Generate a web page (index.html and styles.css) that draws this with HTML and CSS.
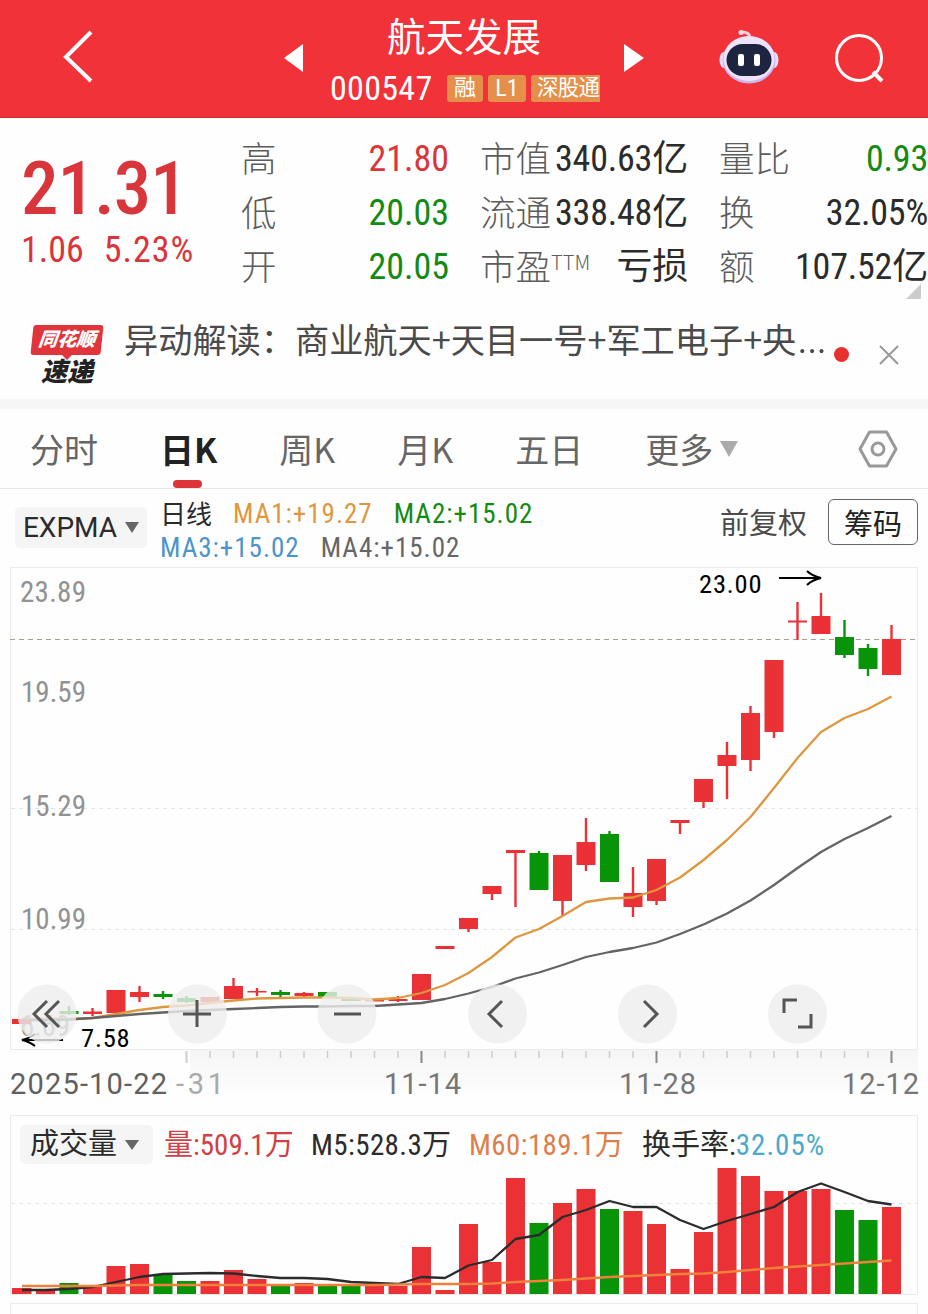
FILE: index.html
```html
<!DOCTYPE html>
<html lang="zh-CN">
<head>
    <meta charset="UTF-8">
    <meta name="viewport" content="width=device-width, initial-scale=1.0">
    <title>航天发展 000547</title>
    <link rel="stylesheet" href="styles.css">
</head>
<body>

<header class="topbar">
    <svg class="back" width="36" height="56" viewBox="0 0 36 56"><path d="M31 4 L6 29 L31 53" fill="none" stroke="#fff" stroke-width="4"/></svg>
    <svg class="arrow" width="20" height="28" viewBox="0 0 20 28"><path d="M19 0 V28 L0 14 Z" fill="#fff"/></svg>
    <div class="stock">
        <h1>航天发展</h1>
        <div class="code-row">
            <span class="code">000547</span>
            <span class="tag tag-rong">融</span>
            <span class="tag tag-l1">L1</span>
            <span class="tag tag-sgt">深股通</span>
        </div>
    </div>
    <svg class="arrow" width="20" height="28" viewBox="0 0 20 28"><path d="M0 0 V28 L20 14 Z" fill="#fff"/></svg>
    <svg class="robot" width="60" height="56" viewBox="0 0 60 56">
        <path d="M31 9 Q30 4 23 4" fill="none" stroke="#ffc9d8" stroke-width="3" stroke-linecap="round"/>
        <circle cx="22" cy="4.500" r="2.500" fill="#ffdce6"/>
        <ellipse cx="5" cy="32" rx="4.500" ry="8" fill="#eadcfb"/>
        <ellipse cx="55" cy="32" rx="4.500" ry="8" fill="#eadcfb"/>
        <ellipse cx="30" cy="32" rx="26.500" ry="23.500" fill="#c9b8f2"/>
        <ellipse cx="30" cy="30.500" rx="25.500" ry="22.500" fill="#efe3fb"/>
        <rect x="7.500" y="16" width="45" height="32" rx="16" fill="#1d2440"/>
        <rect x="19" y="26" width="6" height="12" rx="2" fill="#fff"/>
        <rect x="35" y="26" width="6" height="12" rx="2" fill="#fff"/>
    </svg>
    <svg class="search" width="52" height="52" viewBox="0 0 52 52"><circle cx="25" cy="25" r="22.500" fill="none" stroke="#fff" stroke-width="3"/><path d="M39 39 L48 48" stroke="#fff" stroke-width="4"/></svg>
</header>

<section class="quote">
    <div class="price">
        <div class="last">21.31</div>
        <div class="change"><span>1.06</span><span class="percent">5.23%</span></div>
    </div>
    <dl class="col col-a">
        <dt>高</dt><dd class="up">21.80</dd>
        <dt>低</dt><dd class="down">20.03</dd>
        <dt>开</dt><dd class="down">20.05</dd>
    </dl>
    <dl class="col col-b">
        <dt>市值</dt><dd>340.63<i>亿</i></dd>
        <dt>流通</dt><dd>338.48<i>亿</i></dd>
        <dt>市盈<sup>TTM</sup></dt><dd><i>亏损</i></dd>
    </dl>
    <dl class="col col-c">
        <dt>量比</dt><dd class="down">0.93</dd>
        <dt>换</dt><dd>32.05%</dd>
        <dt>额</dt><dd>107.52<i>亿</i></dd>
    </dl>
    <svg class="corner" width="15" height="15" viewBox="0 0 15 15"><path d="M15 0 V15 H0 Z" fill="#ccc"/></svg>
</section>

<section class="news">
    <div class="logo">
        <span class="logo-top">同花顺</span>
        <svg width="10" height="5" viewBox="0 0 10 5"><path d="M0 0 H10 L5 5 Z" fill="#e0353a"/></svg>
        <span class="logo-bottom">速递</span>
    </div>
    <p>异动解读：商业航天+天目一号+军工电子+央<span class="dots">…</span></p>
    <i class="dot"></i>
    <svg class="close" width="22" height="22" viewBox="0 0 22 22"><path d="M2 2 L20 20 M20 2 L2 20" stroke="#999" stroke-width="2"/></svg>
</section>

<nav class="tabs">
    <a>分时</a>
    <a class="active">日K</a>
    <a>周K</a>
    <a>月K</a>
    <a>五日</a>
    <a>更多<svg width="18" height="16" viewBox="0 0 18 16"><path d="M0 0 H18 L9 16 Z" fill="#aaa"/></svg></a>
    <svg class="gear" width="40" height="38" viewBox="0 0 40 38"><path d="M11.500 2 H28.500 L38 19 L28.500 36 H11.500 L2 19 Z" fill="none" stroke="#999" stroke-width="3" stroke-linejoin="round"/><circle cx="20" cy="19" r="6" fill="none" stroke="#999" stroke-width="3"/></svg>
</nav>

<section class="legend">
    <div class="picker">EXPMA<svg width="14" height="11" viewBox="0 0 14 11"><path d="M0 0 H14 L7 11 Z" fill="#666"/></svg></div>
    <div class="ma">
        <div><span class="cjk">日线</span><span class="ma1">MA1:+19.27</span><span class="ma2">MA2:+15.02</span></div>
        <div><span class="ma3">MA3:+15.02</span><span class="ma4">MA4:+15.02</span></div>
    </div>
    <span class="adjust">前复权</span>
    <button class="chips">筹码</button>
</section>

<svg class="chart" width="928" height="549" viewBox="0 566 928 549">
    <defs>
        <linearGradient id="fade" x1="0" y1="0" x2="0" y2="1">
            <stop offset="0" stop-color="#f5f5f5"/>
            <stop offset="1" stop-color="#fefefe"/>
        </linearGradient>
    </defs>
    <rect x="190" y="1050" width="728" height="50" fill="url(#fade)"/>
    <rect class="frame" x="10.500" y="567.500" width="907" height="482"/>
    <path class="grid" d="M11 808.500 H917 M11 929.500 H917"/>
    <path class="last-line" d="M10 639.500 H917"/>
    <g class="axis">
        <text x="20" y="602" textLength="66">23.89</text>
        <text x="21" y="702" textLength="65">19.59</text>
        <text x="21" y="816" textLength="65">15.29</text>
        <text x="21" y="929" textLength="65">10.99</text>
        <text x="20" y="1036" textLength="50">6.69</text>
    </g>
    <g id="ticks"></g>
    <g id="candles"></g>
    <polyline id="ma1" class="line" stroke="#df973f"/>
    <polyline id="ma4" class="line" stroke="#646464"/>
    <g class="extremes">
        <text x="699" y="593">23.00</text>
        <path d="M779 578 H819 M807 571 Q812 576 821 578 Q812 580 807 585"/>
        <text x="81" y="1047">7.58</text>
        <path d="M23 1040 H63 M35 1034 Q30 1038 22 1040 Q30 1042 35 1046"/>
    </g>
    <g class="dates">
        <text x="10" y="1094" textLength="157" class="start">2025-10-22</text>
        <text x="176" y="1094" textLength="48" class="faded">-31</text>
        <text x="384" y="1094" textLength="77">11-14</text>
        <text x="619" y="1094" textLength="77">11-28</text>
        <text x="842" y="1094" textLength="77">12-12</text>
    </g>
    <g class="controls">
        <circle cx="47" cy="1014" r="29.500"/>
        <circle cx="197.500" cy="1014" r="29.500"/>
        <circle cx="347" cy="1014" r="29.500"/>
        <circle cx="497.500" cy="1014" r="29.500"/>
        <circle cx="647.500" cy="1014" r="29.500"/>
        <circle cx="797.500" cy="1014" r="29.500"/>
        <path d="M47 1001 L34 1014 L47 1027 M59 1001 L46 1014 L59 1027"/>
        <path d="M183 1014 H211 M197 1000 V1027"/>
        <path d="M334 1014 H361"/>
        <path d="M502 1001 L489 1014 L502 1027"/>
        <path d="M644 1001 L657 1014 L644 1027"/>
        <path d="M784 1013 V1000 H797 M811 1014 V1027 H798"/>
    </g>
</svg>

<section class="volume">
    <div class="vol-legend">
        <div class="picker vol-picker">成交量<svg width="14" height="10" viewBox="0 0 14 10"><path d="M0 0 H14 L7 10 Z" fill="#666"/></svg></div>
        <span class="v1">量:509.1万</span>
        <span class="v2">M5:528.3万</span>
        <span class="v3">M60:189.1万</span>
        <span class="v4">换手率:<b>32.05%</b></span>
    </div>
    <svg width="906" height="129" viewBox="11 1165 906 129">
        <path class="grid" d="M11 1203.500 H917"/>
        <g id="volumes"></g>
        <polyline id="m5" class="line" stroke="#2b2b2b"/>
        <polyline id="m60" class="line" stroke="#f0803c"/>
    </svg>
</section>
<div class="next-panel"></div>

<script src="chart.js"></script>
</body>
</html>
```
FILE: styles.css
```css
* {
    box-sizing: border-box;
}
body {
    margin: 0;
    width: 928px;
    height: 1314px;
    overflow: hidden;
    background: #fefefe;
    color: #2b2b2b;
    font-family: Roboto, "Noto Sans CJK SC", sans-serif;
    font-stretch: 87%;
}
svg {
    display: block;
    flex: none;
}
h1, dl, dd, p {
    margin: 0;
}
i {
    font-style: normal;
}

/* top bar */
.topbar {
    display: flex;
    align-items: flex-start;
    height: 118px;
    background: #f13239;
    border-bottom: 1px solid #c9323a;
    color: #fff;
}
.back {
    margin: 28px 0 0 60px;
}
.arrow {
    margin-top: 44px;
}
.back + .arrow {
    margin-left: 188px;
}
.stock {
    width: 320px;
    padding-left: 26px;
}
.stock h1 {
    width: 268px;
    height: 75px;
    font: 400 38.5px/68px "Noto Sans CJK SC", sans-serif;
    text-align: center;
}
.code-row {
    display: flex;
    gap: 5px;
    height: 27px;
    line-height: 27px;
}
.code {
    flex: none;
    width: 112px;
    font-size: 34px;
    letter-spacing: 0.3px;
}
.tag {
    flex: none;
    height: 27px;
    border-radius: 3px;
    background: #e5904a;
    font-size: 22px;
    line-height: 26px;
    text-align: center;
}
.tag-rong {
    width: 36px;
}
.tag-l1 {
    width: 38px;
    font-size: 24px;
}
.tag-sgt {
    width: 69px;
    padding-left: 6px;
    border-radius: 3px 0 0 3px;
    font-size: 21.5px;
    letter-spacing: -0.8px;
    text-align: left;
    white-space: nowrap;
}
.robot {
    margin: 28px 0 0 75px;
}
.search {
    margin: 33px 0 0 55px;
}

/* quote */
.quote {
    position: relative;
    display: flex;
    height: 187px;
    padding-top: 14px;
}
.price {
    width: 241px;
    padding-left: 21px;
    color: #d9363c;
}
.last {
    height: 92px;
    padding-top: 10px;
    font-size: 75px;
    font-weight: 500;
    line-height: 92px;
    letter-spacing: -1px;
}
.change {
    display: flex;
    gap: 20px;
    margin-top: 6px;
    font-size: 36px;
    line-height: 40px;
}
.percent {
    letter-spacing: 1px;
}
.col {
    display: grid;
    grid-template-columns: 72px 1fr;
    grid-auto-rows: 54px;
    line-height: 54px;
}
.col-a {
    width: 208px;
}
.col-b {
    width: 208px;
    margin-left: 31px;
}
.col-c {
    width: 209px;
    margin-left: 31px;
}
.col dt {
    margin-top: -2px;
    font: 300 35.5px/54px "Noto Sans CJK SC", sans-serif;
    color: #5c5c5c;
    white-space: nowrap;
}
.col dd {
    font-size: 36px;
    text-align: right;
    white-space: nowrap;
}
.col-b dd, .col-c dd {
    letter-spacing: -0.2px;
}
.col sup {
    font-size: 20px;
    line-height: 0;
    vertical-align: 10px;
}
.up {
    color: #d9363c;
}
.down {
    color: #138a13;
}
.corner {
    position: absolute;
    right: 7px;
    bottom: 6px;
}

/* news strip */
.news {
    display: flex;
    height: 104px;
    border-bottom: 10px solid #f6f6f6;
}
.logo {
    display: flex;
    flex-direction: column;
    align-items: center;
    width: 72px;
    margin: 20px 0 0 31px;
    font-weight: 900;
    font-style: italic;
}
.logo-top {
    width: 70px;
    height: 30px;
    border-radius: 3px;
    background: #e0353a;
    color: #fff;
    font-size: 19px;
    line-height: 30px;
    text-align: center;
    transform: skewX(-6deg);
}
.logo-bottom {
    margin-top: -2px;
    color: #222;
    font-size: 26px;
    line-height: 28px;
}
.news p {
    width: 709px;
    margin-left: 21px;
    font: 34.2px/67px "Noto Sans CJK SC", sans-serif;
    color: #4a4a4a;
    white-space: nowrap;
}
.dots {
    font-family: Roboto, sans-serif;
    font-size: 49px;
    font-weight: 300;
    line-height: 1;
}
.dot {
    width: 15px;
    height: 15px;
    margin: 42px 0 0 1px;
    border-radius: 50%;
    background: #e8302f;
}
.close {
    margin: 39px 0 0 29px;
}

/* period tabs */
.tabs {
    display: flex;
    height: 80px;
    padding-left: 30px;
    border-bottom: 1px solid #e6e6e6;
    font: 34px/78px "Noto Sans CJK SC", sans-serif;
    color: #666;
}
.tabs a {
    display: flex;
    align-items: center;
    margin-right: 62px;
}
.tabs .active {
    position: relative;
    color: #222;
    font-weight: 700;
}
.tabs .active::after {
    content: "";
    position: absolute;
    left: 13px;
    bottom: 0;
    width: 29px;
    height: 8px;
    border-radius: 4px;
    background: #dc3438;
}
.tabs a svg {
    margin-left: 7px;
}
.gear {
    margin: 21px 0 0 58px;
}

/* indicator legend */
.legend {
    display: flex;
    height: 77px;
}
.picker {
    display: flex;
    align-items: center;
    justify-content: center;
    gap: 8px;
    width: 132px;
    height: 41px;
    margin: 18px 0 0 15px;
    border-radius: 5px;
    background: #f5f5f5;
    font-size: 28px;
    font-stretch: 100%;
}
.ma {
    width: 560px;
    padding: 8px 0 0 13px;
    font-size: 27px;
    line-height: 34px;
    letter-spacing: 1px;
}
.ma div {
    display: flex;
    height: 34px;
    gap: 21px;
}
.cjk {
    font-family: "Noto Sans CJK SC", sans-serif;
    font-size: 26px;
    line-height: 31px;
    letter-spacing: 0;
}
.ma1 {
    color: #df973f;
}
.ma2 {
    color: #138a13;
}
.ma3 {
    color: #4c94cb;
}
.ma4 {
    color: #666;
}
.adjust {
    margin-left: 13px;
    font-size: 29px;
    line-height: 71px;
    color: #4a4a4a;
}
.chips {
    width: 90px;
    height: 46px;
    margin: 10px 0 0 21px;
    padding: 0;
    border: 1px solid #666;
    border-radius: 6px;
    background: none;
    color: #222;
    font: 29px/42px "Noto Sans CJK SC", sans-serif;
}

/* charts */
.frame {
    fill: none;
    stroke: #ebebeb;
}
.grid {
    stroke: #e4e4e4;
    stroke-dasharray: 4 4;
}
.last-line {
    stroke: #a9a08f;
    stroke-dasharray: 5 4;
}
.line {
    fill: none;
    stroke-width: 2.3;
    stroke-linejoin: round;
}
.axis text {
    fill: #929292;
    font-size: 29px;
}
.extremes text {
    fill: #000;
    font-size: 26.5px;
    letter-spacing: 0.8px;
}
.extremes path {
    fill: none;
    stroke: #000;
    stroke-width: 2;
}
.dates text {
    fill: #777;
    font-size: 29px;
    font-stretch: 100%;
}
.dates .start {
    fill: #606060;
}
.dates .faded {
    fill: #aaa;
}
.controls circle {
    fill: #eee;
    fill-opacity: 0.8;
}
.controls path {
    fill: none;
    stroke: #555;
    stroke-width: 3;
}

/* volume */
.volume {
    width: 908px;
    height: 180px;
    margin-left: 10px;
    border: 1px solid #ebebeb;
}
.vol-legend {
    display: flex;
    height: 49px;
    font-size: 29px;
    line-height: 58px;
    white-space: nowrap;
}
.vol-picker {
    width: 133px;
    height: 39px;
    margin: 9px 11px 0 9px;
    padding-right: 4px;
    line-height: 39px;
    font-size: 29px;
}
.vol-legend b {
    font-weight: 400;
    letter-spacing: 1px;
    color: #4ba9cb;
}
.v1 {
    width: 147px;
    color: #d04045;
}
.v2 {
    width: 158px;
    letter-spacing: 0.4px;
}
.v3 {
    width: 173px;
    letter-spacing: 0.4px;
    color: #dd7e4b;
}
.next-panel {
    width: 908px;
    height: 20px;
    margin: 8px 0 0 10px;
    border: 1px solid #ebebeb;
}
```
FILE: chart.js
```javascript
const RED = '#ea3136';
const GREEN = '#089408';
const STEP = 23.5;
const X0 = 22;

// [color, body top, body bottom, high, low]
const candles = [
    ['r', 1019, 1024], ['r', 1018, 1021], ['g', 1011, 1014, 1006, 1015], ['r', 1011.5, 1014, 1008, 1016],
    ['r', 990, 1013], ['r', 992, 997, 986, 1002], ['g', 994, 997, 991, 999], ['g', 998, 1002, 996, 1003],
    ['r', 997, 1002], ['r', 986, 999, 978, 999], ['r', 991, 992.5, 988, 996], ['g', 992, 995, 990, 997],
    ['r', 993, 996, 992, 997], ['g', 992, 997], ['g', 999, 1001], ['r', 999, 1001.5],
    ['r', 999, 1001, 996, 1002], ['r', 974, 1000], ['r', 946, 949], ['r', 918, 929, 918, 932],
    ['r', 886, 894, 886, 900], ['r', 850, 853, 850, 907], ['g', 853, 890, 851, 890], ['r', 855, 901, 855, 916],
    ['r', 842, 865, 818, 871], ['g', 834, 882, 831, 882], ['r', 893, 907, 867, 917], ['r', 859, 901, 859, 905],
    ['r', 820, 823, 820, 834], ['r', 779, 802, 779, 808], ['r', 755, 766, 742, 799], ['r', 713, 760, 706, 771],
    ['r', 660, 732, 660, 738], ['r', 620.5, 622.5, 602, 640], ['r', 616, 634, 593, 634], ['g', 637, 655, 620, 658],
    ['g', 648, 669, 644, 676], ['r', 639, 675, 625, 675]
];

const ma1 = [1019, 1019, 1019, 1018, 1014, 1010, 1007, 1005.5, 1003, 1000.5, 998.5, 998, 997.5, 997.5, 998, 999.5,
    998, 993, 985, 973, 957, 937.5, 929, 916, 902, 898.5, 897.5, 890, 877.5, 860, 840, 817, 788, 758, 732, 718, 709, 696.5];
const ma4 = [1020, 1020, 1019.5, 1018, 1016, 1014, 1012.5, 1011, 1010, 1009, 1008, 1007, 1006.5, 1006.5, 1006, 1006,
    1004.5, 1003, 999, 993.5, 987, 978.5, 972.5, 965, 957, 952, 948, 942.5, 934, 924.5, 913.5, 900.5, 885, 868, 852, 839, 828, 816];

const volumes = [1288, 1290, 1283, 1287, 1266, 1264, 1274, 1281, 1281, 1270, 1279, 1285, 1283, 1285, 1285, 1286,
    1286, 1247, 1290, 1224, 1262, 1178, 1223, 1203, 1189, 1209, 1211, 1224, 1269, 1232, 1168, 1176, 1191, 1191, 1189, 1210, 1220, 1207];
const m5 = [1290, 1290, 1289, 1287, 1282, 1277, 1274, 1273.5, 1273, 1273.5, 1276, 1278, 1278, 1279, 1282, 1283,
    1284, 1277, 1278, 1265.5, 1260, 1239, 1235, 1217, 1210, 1201, 1207, 1207, 1220, 1229, 1221, 1214, 1207, 1192, 1183.5, 1192, 1201, 1204.5];
const m60 = [1286, 1286, 1286, 1286, 1285.5, 1285, 1285, 1285, 1285, 1285, 1285, 1285, 1285, 1285, 1285, 1285,
    1284.5, 1284, 1284, 1284, 1283.5, 1282, 1281, 1280, 1278.5, 1277, 1276, 1275, 1274, 1273.5, 1272, 1270, 1268, 1266.5, 1265, 1263.5, 1262, 1260.5];

const x = i => X0 + i * STEP;
const points = list => list.map((y, i) => `${x(i)},${y}`).join(' ');

let body = '', bars = '', ticks = '';
candles.forEach(([c, top, bottom, high, low], i) => {
    const color = c === 'r' ? RED : GREEN;
    const left = i === 0 ? 12 : x(i) - 9.5;
    body += `<rect x="${left}" y="${top}" width="${x(i) + 9.5 - left}" height="${bottom - top}" fill="${color}"/>`;
    if (high) {
        body += `<path d="M${x(i)} ${high} V${low}" stroke="${color}" stroke-width="2.4"/>`;
    }
    bars += `<rect x="${left}" y="${volumes[i]}" width="${x(i) + 9.5 - left}" height="${1294 - volumes[i]}" fill="${color}"/>`;
    // every tenth trading day gets a longer tick
    if (i >= 7) {
        const major = (i - 7) % 10 === 0;
        const shade = major && i > 7 ? '#888' : '#ccc';
        ticks += `<path d="M${x(i)} 1051 V${major ? 1063 : 1058}" stroke="${shade}" stroke-width="${major ? 2 : 1.5}"/>`;
    }
});

document.getElementById('candles').innerHTML = body;
document.getElementById('volumes').innerHTML = bars;
document.getElementById('ticks').innerHTML = ticks;
document.getElementById('ma1').setAttribute('points', points(ma1));
document.getElementById('ma4').setAttribute('points', points(ma4));
document.getElementById('m5').setAttribute('points', points(m5));
document.getElementById('m60').setAttribute('points', points(m60));
```
